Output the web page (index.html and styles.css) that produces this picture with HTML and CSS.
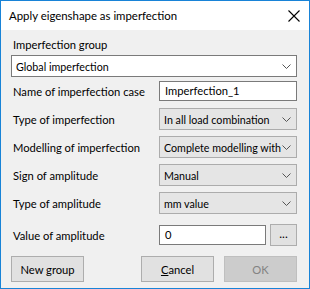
FILE: index.html
```html
<!DOCTYPE html>
<html lang="en">
<head>
    <meta charset="UTF-8">
    <title>Apply eigenshape as imperfection</title>
    <link rel="stylesheet" href="styles.css">
</head>
<body>
    <div class="window">
        <div class="title-bar">
            <span class="title">Apply eigenshape as imperfection</span>
            <svg class="close" width="12" height="12" viewBox="0 0 12 12">
                <path d="M0.5 0.5 L11.5 11.5 M11.5 0.5 L0.5 11.5" stroke="#000" stroke-width="1.1" fill="none"/>
            </svg>
        </div>

        <div class="content">
            <div class="group-label">Imperfection group</div>
            <div class="combo combo-white">
                <span>Global imperfection</span>
                <svg class="chevron" width="9" height="5" viewBox="0 0 9 5"><path d="M0.5 0.5 L4.5 4.5 L8.5 0.5" stroke="#555" fill="none"/></svg>
            </div>

            <div class="row">
                <label>Name of imperfection case</label>
                <div class="edit">Imperfection_1</div>
            </div>
            <div class="row">
                <label>Type of imperfection</label>
                <div class="combo">
                    <span>In all load combination</span>
                    <svg class="chevron" width="9" height="5" viewBox="0 0 9 5"><path d="M0.5 0.5 L4.5 4.5 L8.5 0.5" stroke="#555" fill="none"/></svg>
                </div>
            </div>
            <div class="row">
                <label>Modelling of imperfection</label>
                <div class="combo">
                    <span>Complete modelling with</span>
                    <svg class="chevron" width="9" height="5" viewBox="0 0 9 5"><path d="M0.5 0.5 L4.5 4.5 L8.5 0.5" stroke="#555" fill="none"/></svg>
                </div>
            </div>
            <div class="row">
                <label>Sign of amplitude</label>
                <div class="combo">
                    <span>Manual</span>
                    <svg class="chevron" width="9" height="5" viewBox="0 0 9 5"><path d="M0.5 0.5 L4.5 4.5 L8.5 0.5" stroke="#555" fill="none"/></svg>
                </div>
            </div>
            <div class="row">
                <label>Type of amplitude</label>
                <div class="combo">
                    <span>mm value</span>
                    <svg class="chevron" width="9" height="5" viewBox="0 0 9 5"><path d="M0.5 0.5 L4.5 4.5 L8.5 0.5" stroke="#555" fill="none"/></svg>
                </div>
            </div>
            <div class="row row-value">
                <label>Value of amplitude</label>
                <div class="value-box">
                    <div class="edit">0</div>
                    <button class="dots">...</button>
                </div>
            </div>

            <div class="buttons">
                <button class="btn">New group</button>
                <div class="right-buttons">
                    <button class="btn"><u>C</u>ancel</button>
                    <button class="btn btn-disabled">OK</button>
                </div>
            </div>
        </div>
    </div>
</body>
</html>
```

FILE: styles.css
```css
body {
    margin: 0;
    padding: 0;
    font-family: Lato, "Liberation Sans", sans-serif;
    font-size: 11.2px;
    color: #000;
    background: #fff;
}
.window {
    width: 310px;
    height: 289px;
    box-sizing: border-box;
    border: 1px solid #1883d7;
    background-color: #f0f0f0;
}
.title-bar {
    height: 29px;
    background-color: #fff;
    display: flex;
    align-items: center;
    justify-content: space-between;
    padding: 0 9px 0 8px;
}
.title {
    font-size: 11.4px;
}
.close {
    display: block;
}
.content {
    padding: 7px 12px 0 10px;
}
.group-label {
    height: 15px;
    line-height: 15px;
    padding-left: 2px;
    margin-bottom: 3px;
}
.combo {
    height: 22px;
    box-sizing: border-box;
    border: 1px solid #acacac;
    background-color: #e5e5e5;
    display: flex;
    align-items: center;
    justify-content: space-between;
    gap: 1px;
    padding: 0 5px 0 4px;
    white-space: nowrap;
    overflow: hidden;
}
.combo span {
    overflow: hidden;
    font-size: 10.7px;
}
.combo-white {
    background-color: #fff;
    border-color: #7a7a7a;
}
.chevron {
    display: block;
    flex-shrink: 0;
}
.row {
    height: 28px;
    display: grid;
    grid-template-columns: 148px 1fr;
    align-items: center;
    white-space: nowrap;
}
.row:first-of-type {
    margin-top: 2px;
}
.row label {
    padding-left: 2px;
}
.edit {
    height: 20px;
    box-sizing: border-box;
    border: 1px solid #7a7a7a;
    background-color: #fff;
    line-height: 18px;
    padding-left: 5px;
}
.row-value {
    margin-top: 4px;
}
.value-box {
    display: flex;
    align-items: center;
    gap: 4px;
}
.value-box .edit {
    flex-grow: 1;
}
.dots {
    width: 27px;
    height: 22px;
    border: 1px solid #adadad;
    background-color: #e1e1e1;
    font-family: inherit;
    font-size: 12px;
    padding: 0 0 4px;
}
.buttons {
    margin-top: 7px;
    display: flex;
    justify-content: space-between;
}
.right-buttons {
    display: flex;
    gap: 10px;
}
.btn {
    width: 73px;
    height: 26px;
    border: 1px solid #adadad;
    background-color: #e1e1e1;
    font-family: inherit;
    font-size: 11.2px;
    color: #000;
    padding: 0;
}
.btn u {
    text-decoration: underline;
}
.btn-disabled {
    background-color: #cccccc;
    border-color: #bfbfbf;
    color: #838383;
}
```
